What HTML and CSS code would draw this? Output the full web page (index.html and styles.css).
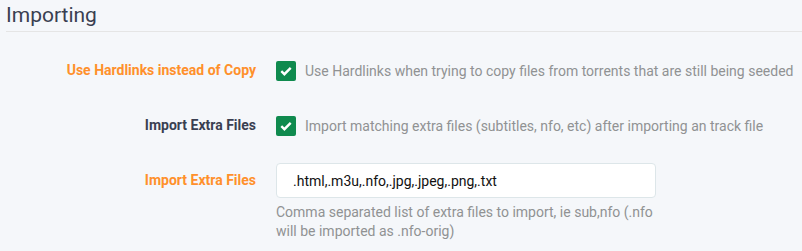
FILE: index.html
```html
<!DOCTYPE html>
<html lang="en">
<head>
    <meta charset="UTF-8">
    <title>Importing</title>
    <link rel="stylesheet" href="styles.css">
</head>
<body>
    <fieldset class="section">
        <legend class="legend">Importing</legend>

        <div class="form-group">
            <label class="label advanced">Use Hardlinks instead of Copy</label>
            <div class="control">
                <span class="checkbox">
                    <svg width="12" height="10" viewBox="0 0 12 10"><path d="M1.3 5.2 4.4 8.2 10.7 1.8" fill="none" stroke="#fff" stroke-width="2.4"/></svg>
                </span>
                <span class="help-inline">Use Hardlinks when trying to copy files from torrents that are still being seeded</span>
            </div>
        </div>

        <div class="form-group">
            <label class="label">Import Extra Files</label>
            <div class="control">
                <span class="checkbox">
                    <svg width="12" height="10" viewBox="0 0 12 10"><path d="M1.3 5.2 4.4 8.2 10.7 1.8" fill="none" stroke="#fff" stroke-width="2.4"/></svg>
                </span>
                <span class="help-inline">Import matching extra files (subtitles, nfo, etc) after importing an track file</span>
            </div>
        </div>

        <div class="form-group">
            <label class="label advanced">Import Extra Files</label>
            <div class="control column">
                <input class="text-input" type="text" value=".html,.m3u,.nfo,.jpg,.jpeg,.png,.txt">
                <div class="help-text">Comma separated list of extra files to import, ie sub,nfo (.nfo will be imported as .nfo-orig)</div>
            </div>
        </div>
    </fieldset>
</body>
</html>
```

FILE: styles.css
```css
body {
    margin: 0;
    background: #f5f7fa;
    font-family: Roboto, "Open Sans", sans-serif;
    font-size: 14px;
    color: #515253;
}

.section {
    margin: 0;
    padding: 0 0 0 6px;
    border: none;
}

.legend {
    display: block;
    width: 100%;
    box-sizing: border-box;
    padding: 0;
    margin: 0 0 21px 0;
    height: 32px;
    line-height: 31px;
    font-size: 21px;
    color: #3a3f51;
    border-bottom: 1px solid #e5e5e5;
}

.form-group {
    display: flex;
    margin-bottom: 20px;
}

.label {
    flex: 0 0 250px;
    text-align: right;
    margin-right: 20px;
    font-weight: bold;
    line-height: 35px;
    color: #3a3f51;
}

.label.advanced {
    color: #ff902b;
}

.control {
    display: flex;
    align-items: center;
    min-height: 35px;
}

.control.column {
    flex-direction: column;
    align-items: flex-start;
}

.checkbox {
    display: flex;
    justify-content: center;
    align-items: center;
    width: 20px;
    height: 20px;
    border-radius: 2px;
    background: #0f8a4e;
    margin-right: 9px;
}

.help-inline {
    color: #909293;
}

.text-input {
    box-sizing: border-box;
    width: 380px;
    height: 35px;
    padding: 6px 16px;
    border: 1px solid #dde6e9;
    border-radius: 4px;
    background: #fff;
    font-family: Roboto, "Open Sans", sans-serif;
    font-size: 14px;
    color: #111;
    outline: none;
}

.help-text {
    width: 380px;
    margin-top: 5px;
    line-height: 19px;
    color: #909293;
}
```
